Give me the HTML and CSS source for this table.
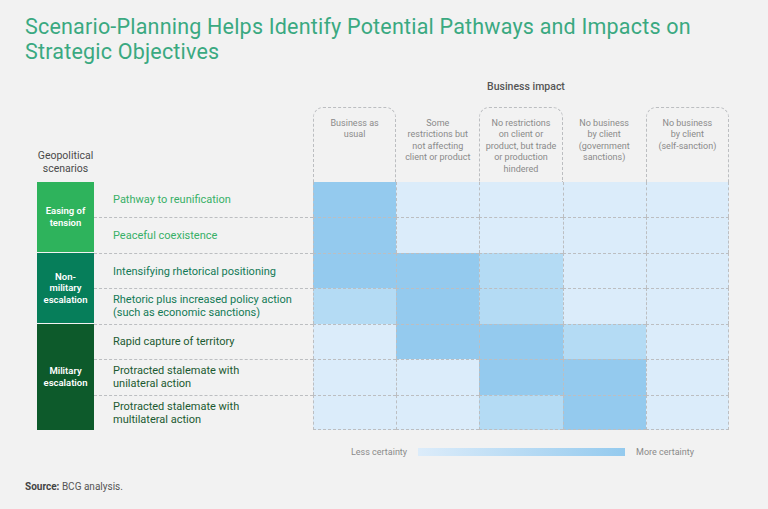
FILE: index.html
```html
<!DOCTYPE html>
<html lang="en">
<head>
<meta charset="utf-8">
<title>Scenario-Planning</title>
<link rel="stylesheet" href="styles.css">
</head>
<body>
<div class="page">
  <h1 class="title">Scenario-Planning Helps Identify Potential Pathways and Impacts on<br>Strategic Objectives</h1>
  <div class="chart">
    <div class="span2"></div>
    <div class="impact">Business impact</div>

    <div class="geo"><span>Geopolitical<br>scenarios</span></div>
    <div></div>
    <div class="hd box">Business as<br>usual</div>
    <div class="hd">Some<br>restrictions but<br>not affecting<br>client or product</div>
    <div class="hd box">No restrictions<br>on client or<br>product, but trade<br>or production<br>hindered</div>
    <div class="hd">No business<br>by client<br>(government<br>sanctions)</div>
    <div class="hd box">No business<br>by client<br>(self-sanction)</div>

    <div class="grp g1">Easing of<br>tension</div>
    <div class="grp g2">Non-<br>military<br>escalation</div>
    <div class="grp g3">Military<br>escalation</div>

    <div class="lbl t1">Pathway to reunification</div>
    <div class="c l2"></div><div class="c l0"></div><div class="c l0"></div><div class="c l0"></div><div class="c l0 e"></div>

    <div class="lbl t1 sep">Peaceful coexistence</div>
    <div class="c sep l2"></div><div class="c sep l0"></div><div class="c sep l0"></div><div class="c sep l0"></div><div class="c sep l0 e"></div>

    <div class="lbl t2 sep">Intensifying rhetorical positioning</div>
    <div class="c sep l2"></div><div class="c sep l2"></div><div class="c sep l1"></div><div class="c sep l0"></div><div class="c sep l0 e"></div>

    <div class="lbl t2 sep">Rhetoric plus increased policy action<br>(such as economic sanctions)</div>
    <div class="c sep l1"></div><div class="c sep l2"></div><div class="c sep l1"></div><div class="c sep l0"></div><div class="c sep l0 e"></div>

    <div class="lbl t3 sep">Rapid capture of territory</div>
    <div class="c sep l0"></div><div class="c sep l2"></div><div class="c sep l2"></div><div class="c sep l1"></div><div class="c sep l0 e"></div>

    <div class="lbl t3 sep">Protracted stalemate with<br>unilateral action</div>
    <div class="c sep l0"></div><div class="c sep l0"></div><div class="c sep l2"></div><div class="c sep l2"></div><div class="c sep l0 e"></div>

    <div class="lbl t3 sep">Protracted stalemate with<br>multilateral action</div>
    <div class="c sep b l0"></div><div class="c sep b l0"></div><div class="c sep b l1"></div><div class="c sep b l2"></div><div class="c sep b l0 e"></div>

    <div class="span2"></div>
    <div class="legend">
      <span>Less certainty</span>
      <span class="bar"></span>
      <span>More certainty</span>
    </div>
  </div>
  <p class="source"><b>Source:</b> BCG analysis.</p>
</div>
</body>
</html>
```
FILE: styles.css
```css
* { box-sizing: border-box; margin: 0; padding: 0; }
body { background: #f2f2f2; font-family: Roboto, "Noto Sans", sans-serif; }
.page { width: 768px; height: 509px; padding: 14px 25px 0; }
.title { font-size: 21.5px; font-weight: 400; line-height: 25px; letter-spacing: 0.2px; color: #3aa981; }
.chart {
  display: grid;
  grid-template-columns: 57px 219px repeat(5, 83.2px);
  grid-template-rows: 29px 75px repeat(7, 35.43px) 44px;
  margin: 14px 0 0 12px;
}
.span2 { grid-column: 1 / 3; }
.impact { grid-column: 3 / 8; text-align: center; font-size: 10.5px; font-weight: 500; color: #555; line-height: 18px; padding-left: 10px; }
.geo { display: flex; justify-content: center; align-items: flex-end; padding-bottom: 7px; font-size: 10.5px; line-height: 13px; color: #4a4a4a; text-align: center; white-space: nowrap; }
.hd { font-size: 9px; line-height: 11.4px; color: #8a8a8a; text-align: center; padding-top: 11px; white-space: nowrap; }
.hd.box { border: 1px dashed #bcbec1; border-bottom: none; border-radius: 10px 10px 0 0; padding-top: 10px; }
.grp { grid-column: 1; display: flex; align-items: center; justify-content: center; text-align: center; color: #fff; font-weight: 600; font-size: 9.5px; line-height: 11.5px; }
.g1 { grid-row: 3 / 5; background: #2eb35c; border-bottom: 1px solid #f2f2f2; }
.g2 { grid-row: 5 / 7; background: #067e5a; border-bottom: 1px solid #f2f2f2; }
.g3 { grid-row: 7 / 10; background: #0d5a2b; }
.lbl { display: flex; align-items: center; padding-left: 19px; font-size: 11px; line-height: 13px; }
.t1 { color: #37b067; }
.t2 { color: #137a56; }
.t3 { color: #1b5a31; }
.sep { border-top: 1px dashed #bcbec1; }
.c { border-left: 1px dashed #bcbec1; }
.c.e { border-right: 1px dashed #bcbec1; }
.c.b { border-bottom: 1px dashed #bcbec1; }
.l0 { background: #dbecfa; }
.l1 { background: #b4dbf4; }
.l2 { background: #94caee; }
.legend { grid-column: 3 / 8; display: flex; align-items: center; justify-content: center; gap: 11px; font-size: 9px; color: #8a8a8a; padding-left: 3px; }
.bar { width: 207px; height: 8px; background: linear-gradient(90deg, #dcecfa, #94caee); }
.source { margin-top: 6px; font-size: 10px; line-height: 14px; color: #555; }
.source b { font-weight: 700; color: #444; }
```
